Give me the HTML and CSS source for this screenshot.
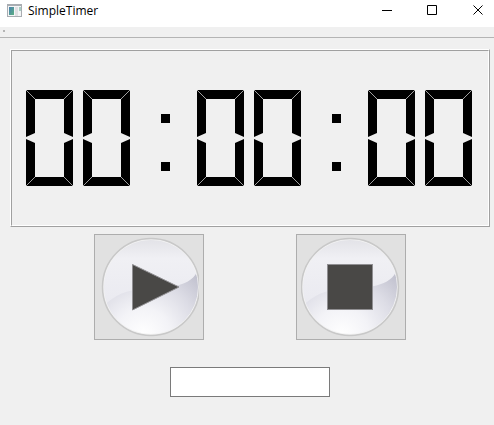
FILE: index.html
```
<!DOCTYPE html>
<html lang="en">
  <head>
    <meta charset="utf-8">
    <title>SimpleTimer</title>
    <link rel="stylesheet" href="styles.css">
  </head>
  <body>
    <header class="titlebar">
      <svg class="app-icon" width="16" height="16" viewBox="0 0 16 16" aria-hidden="true">
        <defs>
          <linearGradient id="pane" x1="0" y1="0" x2="1" y2="1">
            <stop offset="0" stop-color="#4a80b0" />
            <stop offset="1" stop-color="#5cb082" />
          </linearGradient>
        </defs>
        <rect x="0" y="1" width="15" height="13" fill="#a9adb2" />
        <rect x="1" y="3" width="13" height="10" fill="#f4f5f6" />
        <rect x="2" y="4" width="5" height="8" fill="url(#pane)" />
        <rect x="8" y="4" width="3" height="9" fill="#e0e0e3" />
        <rect x="12" y="4" width="2" height="4" fill="#a8cfc4" />
      </svg>
      <h1 class="title">SimpleTimer</h1>
      <div class="window-controls">
        <button type="button" aria-label="Minimize">
          <svg width="11" height="11" viewBox="0 0 11 11"><path d="M0 5.5h10" /></svg>
        </button>
        <button type="button" aria-label="Maximize">
          <svg width="11" height="11" viewBox="0 0 11 11"><path d="M.5 .5h9v9h-9z" /></svg>
        </button>
        <button type="button" aria-label="Close">
          <svg width="11" height="11" viewBox="0 0 11 11"><path d="M.5 .5l9 9M9.5 .5l-9 9" /></svg>
        </button>
      </div>
    </header>

    <div class="toolbar"><span class="grip"></span></div>

    <main class="content">
      <div class="lcd" role="timer" aria-label="00:00:00">
        <div class="lcd-inner">
          <div class="digit"><span class="upper"></span><span class="lower"></span></div>
          <div class="digit"><span class="upper"></span><span class="lower"></span></div>
          <div class="colon"><span></span><span></span></div>
          <div class="digit"><span class="upper"></span><span class="lower"></span></div>
          <div class="digit"><span class="upper"></span><span class="lower"></span></div>
          <div class="colon"><span></span><span></span></div>
          <div class="digit"><span class="upper"></span><span class="lower"></span></div>
          <div class="digit"><span class="upper"></span><span class="lower"></span></div>
        </div>
      </div>

      <div class="buttons">
        <button type="button" class="control" aria-label="Start">
          <svg width="100" height="100" viewBox="0 0 100 100">
            <defs>
              <linearGradient id="ball" x1="0" y1="0" x2="0" y2="1">
                <stop offset="0" stop-color="#e2e2e7" />
                <stop offset="0.2" stop-color="#f0f0f4" />
                <stop offset="0.6" stop-color="#ebebf1" />
                <stop offset="1" stop-color="#e2e2ea" />
              </linearGradient>
              <radialGradient id="shade" gradientUnits="userSpaceOnUse" cx="42" cy="98" r="78">
                <stop offset="0" stop-color="#ffffff" />
                <stop offset="0.35" stop-color="#f3f3f7" />
                <stop offset="0.7" stop-color="#dcdce5" />
                <stop offset="1" stop-color="#c3c3d0" />
              </radialGradient>
              <clipPath id="round"><circle cx="50" cy="50" r="48" /></clipPath>
              <g id="glass">
                <circle cx="50" cy="50" r="48" fill="url(#ball)" />
                <path clip-path="url(#round)" d="M0 72C12 58 26 53 42 52C66 51 92 50 97 32L100 32V100H0z" fill="url(#shade)" />
                <circle cx="50" cy="50" r="47.500" fill="none" stroke="#f2f2f2" />
                <circle cx="50" cy="50" r="48.500" fill="none" stroke="#c8c8c8" stroke-width="1.500" />
              </g>
            </defs>
            <use href="#glass" x="2" />
            <path d="M33.500 27.500L80 50L33.500 73z" fill="#494846" stroke="#908f92" />
          </svg>
        </button>
        <button type="button" class="control" aria-label="Stop">
          <svg width="100" height="100" viewBox="0 0 100 100">
            <use href="#glass" x="-1" />
            <rect x="26.500" y="27.500" width="45" height="45" fill="#494846" stroke="#908f92" />
          </svg>
        </button>
      </div>

      <input class="entry" type="text" aria-label="Time">
    </main>
  </body>
</html>
```
FILE: styles.css
```
* {
  box-sizing: border-box;
}

body {
  margin: 0;
  background-color: #f0f0f0;
  color: #000;
  font-family: "Open Sans", "Noto Sans", sans-serif;
  font-size: 12px;
}

button {
  padding: 0;
  border: 0;
  background: none;
}

/* title bar */
.titlebar {
  display: flex;
  align-items: center;
  height: 27px;
  padding: 0 0 6px 7px;
  background-color: #fff;
}

.title {
  margin: 0 0 0 5px;
  font-size: 12px;
  font-weight: normal;
  line-height: 20px;
}

.window-controls {
  display: flex;
  margin-left: auto;
}

.window-controls button {
  display: flex;
  align-items: center;
  justify-content: center;
  width: 45px;
  height: 20px;
}

.window-controls button:last-child {
  width: 46px;
  padding-left: 1px;
  margin-right: -7px;
}

.window-controls svg {
  fill: none;
  stroke: #000;
}

.toolbar {
  height: 11px;
  padding: 3px;
  border-bottom: 1px solid #b4b4b4;
}

.grip {
  display: block;
  width: 2px;
  height: 2px;
  background-color: #b4b4b4;
}

.content {
  display: flex;
  flex-direction: column;
  align-items: center;
  padding: 11px 4px 28px 10px;
}

/* raised frame, drawn as two opposite bevels */
.lcd {
  align-self: stretch;
  border: 1px solid;
  border-color: #fff #a0a0a0 #a0a0a0 #fff;
}

.lcd-inner {
  display: flex;
  justify-content: center;
  gap: 10px;
  padding: 39px 2px 39px 0;
  border: 1px solid;
  border-color: #a0a0a0 #fff #fff #a0a0a0;
}

.digit {
  display: flex;
  flex-direction: column;
  gap: 2px;
  width: 47px;
}

.upper,
.lower {
  height: 47px;
  background:
    linear-gradient(45deg, #000 46%, #a0a0a0 46% 54%, #000 54%) top left / 9px 9px,
    linear-gradient(-45deg, #000 46%, #a0a0a0 46% 54%, #000 54%) top right / 9px 9px,
    linear-gradient(#000, #000) top / 100% 9px,
    linear-gradient(#000, #000) left / 9px 100%,
    linear-gradient(#000, #000) right / 9px 100%;
  background-repeat: no-repeat;
  clip-path: polygon(0 0, 100% 0, 100% 100%, calc(100% - 9px) calc(100% - 4px), 9px calc(100% - 4px), 0 100%);
}

.lower {
  transform: scaleY(-1);
}

.colon {
  display: flex;
  flex-direction: column;
  align-items: center;
  gap: 39px;
  width: 47px;
  padding: 24px 0 0 3px;
}

.colon span {
  width: 9px;
  height: 9px;
  background-color: #000;
}

/* start / stop */
.buttons {
  display: flex;
  gap: 92px;
  margin: 7px 0 27px;
}

.control {
  display: flex;
  align-items: center;
  justify-content: center;
  width: 110px;
  height: 106px;
  border: 1px solid #adadad;
  background-color: #e1e1e1;
}

.entry {
  width: 160px;
  height: 30px;
  padding: 2px 4px;
  border: 1px solid #7a7a7a;
  background-color: #fff;
  font: inherit;
}
```
